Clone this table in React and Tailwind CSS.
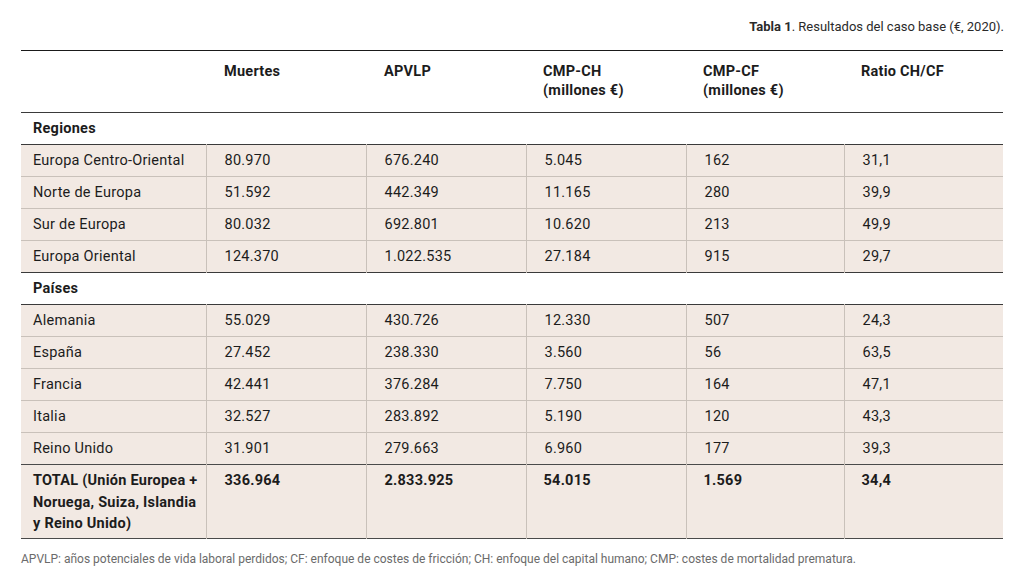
const regiones = [
  ['Europa Centro-Oriental', '80.970', '676.240', '5.045', '162', '31,1'],
  ['Norte de Europa', '51.592', '442.349', '11.165', '280', '39,9'],
  ['Sur de Europa', '80.032', '692.801', '10.620', '213', '49,9'],
  ['Europa Oriental', '124.370', '1.022.535', '27.184', '915', '29,7'],
];

const paises = [
  ['Alemania', '55.029', '430.726', '12.330', '507', '24,3'],
  ['España', '27.452', '238.330', '3.560', '56', '63,5'],
  ['Francia', '42.441', '376.284', '7.750', '164', '47,1'],
  ['Italia', '32.527', '283.892', '5.190', '120', '43,3'],
  ['Reino Unido', '31.901', '279.663', '6.960', '177', '39,3'],
];

function DataRows({ rows }) {
  return rows.map((r, i) => (
    <tr key={i} className={`h-[32px] bg-[#f2e9e3] ${i > 0 ? 'border-t border-[#c9c1ba]' : ''}`}>
      {r.map((c, j) => (
        <td
          key={j}
          className={`align-middle ${j === 0 ? 'pl-[12px]' : 'pl-[18px] border-l border-[#c9c1ba]'}`}
        >
          {c}
        </td>
      ))}
    </tr>
  ));
}

function SectionRow({ label }) {
  return (
    <tr className="h-[32px] border-t border-b border-[#3a3a3a]">
      <td colSpan={6} className="pl-[12px] font-bold align-middle">
        {label}
      </td>
    </tr>
  );
}

export default function App() {
  return (
    <div
      className="w-[1024px] h-[585px] bg-white text-[#1c1c1c] overflow-hidden"
      style={{ fontFamily: 'Roboto, "Liberation Sans", sans-serif' }}
    >
      <div className="h-[50px] flex items-start justify-end pr-[20px] pt-[17px] text-[13px] text-[#2a2a2a]">
        <span>
          <span className="font-bold">Tabla 1</span>. Resultados del caso base (€, 2020).
        </span>
      </div>

      <table className="ml-[21px] w-[982px] table-fixed border-collapse text-[14.5px] tracking-[0.25px] leading-[19px]">
        <colgroup>
          <col className="w-[185px]" />
          <col className="w-[160px]" />
          <col className="w-[160px]" />
          <col className="w-[160px]" />
          <col className="w-[158px]" />
          <col className="w-[159px]" />
        </colgroup>
        <thead>
          <tr className="h-[62px] border-t-[1.5px] border-[#1a1a1a] align-top font-bold">
            <th className="pt-[11px]"></th>
            <th className="pt-[11px] pl-[18px] text-left font-bold">Muertes</th>
            <th className="pt-[11px] pl-[18px] text-left font-bold">APVLP</th>
            <th className="pt-[11px] pl-[17px] text-left font-bold">
              CMP-CH
              <br />
              (millones €)
            </th>
            <th className="pt-[11px] pl-[17px] text-left font-bold">
              CMP-CF
              <br />
              (millones €)
            </th>
            <th className="pt-[11px] pl-[17px] text-left font-bold">Ratio CH/CF</th>
          </tr>
        </thead>
        <tbody>
          <SectionRow label="Regiones" />
          <DataRows rows={regiones} />
          <SectionRow label="Países" />
          <DataRows rows={paises} />
          <tr className="h-[74px] bg-[#f2e9e3] border-t border-b-[1.5px] border-[#4a4a4a] align-top font-bold leading-[21.5px]">
            <td className="pl-[12px] pt-[5px] whitespace-nowrap">
              TOTAL (Unión Europea +
              <br />
              Noruega, Suiza, Islandia
              <br />y Reino Unido)
            </td>
            <td className="pl-[18px] pt-[5px] border-l border-[#c9c1ba]">336.964</td>
            <td className="pl-[18px] pt-[5px] border-l border-[#c9c1ba]">2.833.925</td>
            <td className="pl-[17px] pt-[5px] border-l border-[#c9c1ba]">54.015</td>
            <td className="pl-[17px] pt-[5px] border-l border-[#c9c1ba]">1.569</td>
            <td className="pl-[17px] pt-[5px] border-l border-[#c9c1ba]">34,4</td>
          </tr>
        </tbody>
      </table>

      <p className="ml-[21px] mt-[11px] text-[12px] text-[#6b6b6b]">
        APVLP: años potenciales de vida laboral perdidos; CF: enfoque de costes de fricción; CH: enfoque del capital humano; CMP: costes de mortalidad prematura.
      </p>
    </div>
  );
}
